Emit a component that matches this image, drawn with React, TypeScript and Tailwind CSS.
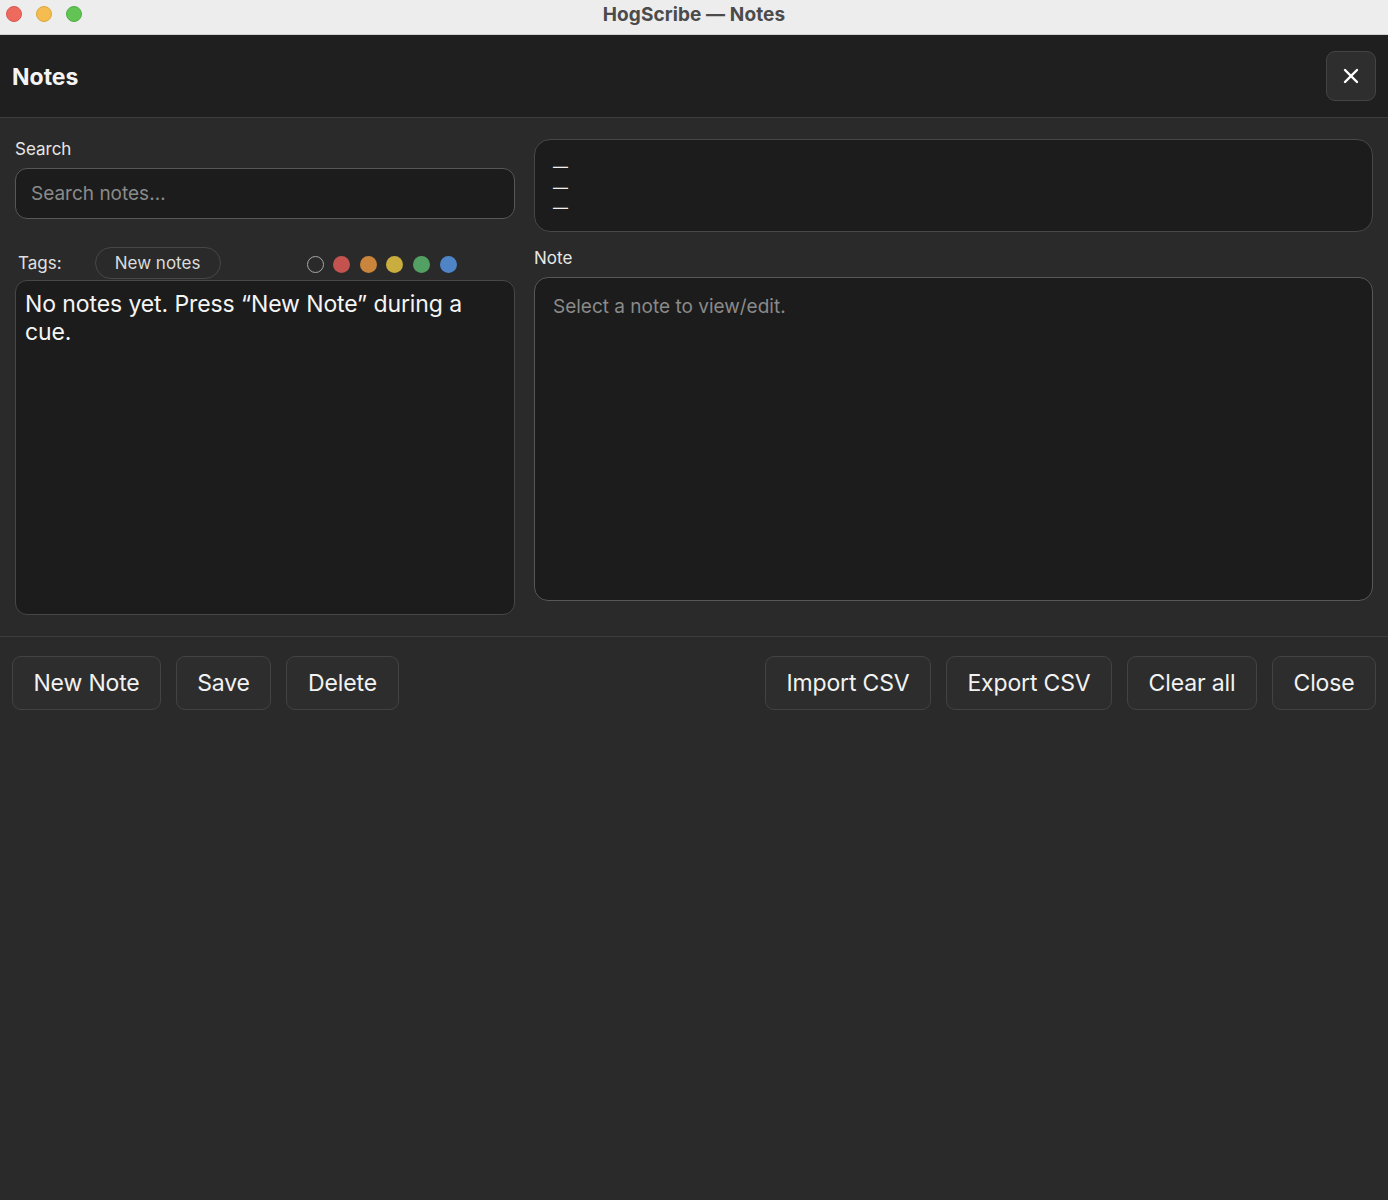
import { X } from 'lucide-react';

const TAG_COLORS = ['bg-[#c4524f]', 'bg-[#c8853b]', 'bg-[#c9ad3f]', 'bg-[#53a162]', 'bg-[#4f85c7]'];

const LEFT_BUTTONS = [
  { label: 'New Note', w: 'w-[149px]' },
  { label: 'Save', w: 'w-[95px]' },
  { label: 'Delete', w: 'w-[113px]' },
];
const RIGHT_BUTTONS = [
  { label: 'Import CSV', w: 'w-[166px]' },
  { label: 'Export CSV', w: 'w-[166px]' },
  { label: 'Clear all', w: 'w-[130px]' },
  { label: 'Close', w: 'w-[104px]' },
];

function FooterButton({ label, w }: { label: string; w: string }) {
  return (
    <button
      className={`${w} h-[54px] flex items-center justify-center rounded-[9px] border border-[#434343] bg-[#2d2d2d] text-[23px] tracking-[-0.15px] text-[#f2f2f2] leading-none`}
    >
      {label}
    </button>
  );
}

export default function App() {
  return (
    <div
      className="min-h-screen bg-[#2a2a2a] text-white"
      style={{ fontFamily: 'Inter, "Noto Sans", "Liberation Sans", sans-serif' }}
    >
      {/* Window title bar */}
      <div className="relative h-[35px] bg-[#ededee] border-b border-[#d0d0d0] flex items-center justify-center pb-[4px]">
        <div className="absolute left-[6px] top-[6px] flex gap-[14px]">
          <span className="w-[16px] h-[16px] rounded-full bg-[#ee6a5f] border border-[#d9564c]" />
          <span className="w-[16px] h-[16px] rounded-full bg-[#f5bd4f] border border-[#dba53c]" />
          <span className="w-[16px] h-[16px] rounded-full bg-[#61c454] border border-[#4fae43]" />
        </div>
        <span className="text-[19px] font-bold text-[#4b4b4b] tracking-[0.1px]">HogScribe — Notes</span>
      </div>

      {/* Header */}
      <div className="h-[83px] bg-[#1f1f1f] border-b border-[#3c3c3c] flex items-center justify-between pl-[12px] pr-[12px]">
        <h1 className="text-[23px] font-bold text-[#f4f4f4] pt-[2px]">Notes</h1>
        <button className="w-[50px] h-[50px] rounded-[9px] border border-[#444] bg-[#2e2e2e] flex items-center justify-center text-white">
          <X size={24} strokeWidth={2.4} />
        </button>
      </div>

      {/* Main */}
      <div className="flex gap-[19px] pl-[15px] pr-[15px] pt-[21px] pb-[21px] border-b border-[#3c3c3c]">
        {/* Left column */}
        <div className="w-[500px] flex flex-col">
          <label className="text-[17px] leading-[20px] text-[#e6e6e6] mb-[9px]">Search</label>
          <div className="h-[51px] rounded-[12px] border border-[#575757] bg-[#1c1c1c] flex items-center px-[15px] pt-[1px]">
            <span className="text-[19px] text-[#8a8a8a]">Search notes…</span>
          </div>

          <div className="flex items-center mt-[28px] h-[32px] pt-[2px]">
            <span className="pl-[3px] text-[17px] text-[#e0e0e0]">Tags:</span>
            <span className="ml-[33px] w-[126px] h-[32px] -mt-[2px] rounded-full border border-[#474747] flex items-center justify-center text-[17px] text-[#dcdcdc] pt-[2px]">
              New notes
            </span>
            <div className="ml-[86px] flex items-center gap-[9.6px]">
              <span className="w-[17px] h-[17px] rounded-full border-[1.5px] border-[#a8a8a8]" />
              {TAG_COLORS.map((c) => (
                <span key={c} className={`w-[17px] h-[17px] rounded-full ${c}`} />
              ))}
            </div>
          </div>

          <div className="mt-[1px] h-[335px] rounded-[12px] border border-[#474747] bg-[#1c1c1c] px-[9px] pt-[9px]">
            <p className="text-[23px] leading-[28px] text-[#f5f5f5] tracking-[-0.1px]">
              No notes yet. Press “New Note” during a cue.
            </p>
          </div>
        </div>

        {/* Right column */}
        <div className="flex-1 flex flex-col">
          <div className="h-[93px] rounded-[16px] border border-[#474747] bg-[#1c1c1c] px-[18px] pt-[17px] flex flex-col">
            {[0, 1, 2].map((i) => (
              <span key={i} className="text-[15px] leading-[20.5px] text-[#f0f0f0]">—</span>
            ))}
          </div>
          <label className="mt-[16px] text-[17px] leading-[20px] text-[#e6e6e6]">Note</label>
          <div className="mt-[9px] h-[324px] rounded-[14px] border border-[#575757] bg-[#1c1c1c] px-[18px] pt-[15px]">
            <span className="text-[19px] text-[#8a8a8a]">Select a note to view/edit.</span>
          </div>
        </div>
      </div>

      {/* Footer */}
      <div className="flex justify-between px-[12px] pt-[19px]">
        <div className="flex gap-[15px]">
          {LEFT_BUTTONS.map((b) => (
            <FooterButton key={b.label} label={b.label} w={b.w} />
          ))}
        </div>
        <div className="flex gap-[15px]">
          {RIGHT_BUTTONS.map((b) => (
            <FooterButton key={b.label} label={b.label} w={b.w} />
          ))}
        </div>
      </div>
    </div>
  );
}
